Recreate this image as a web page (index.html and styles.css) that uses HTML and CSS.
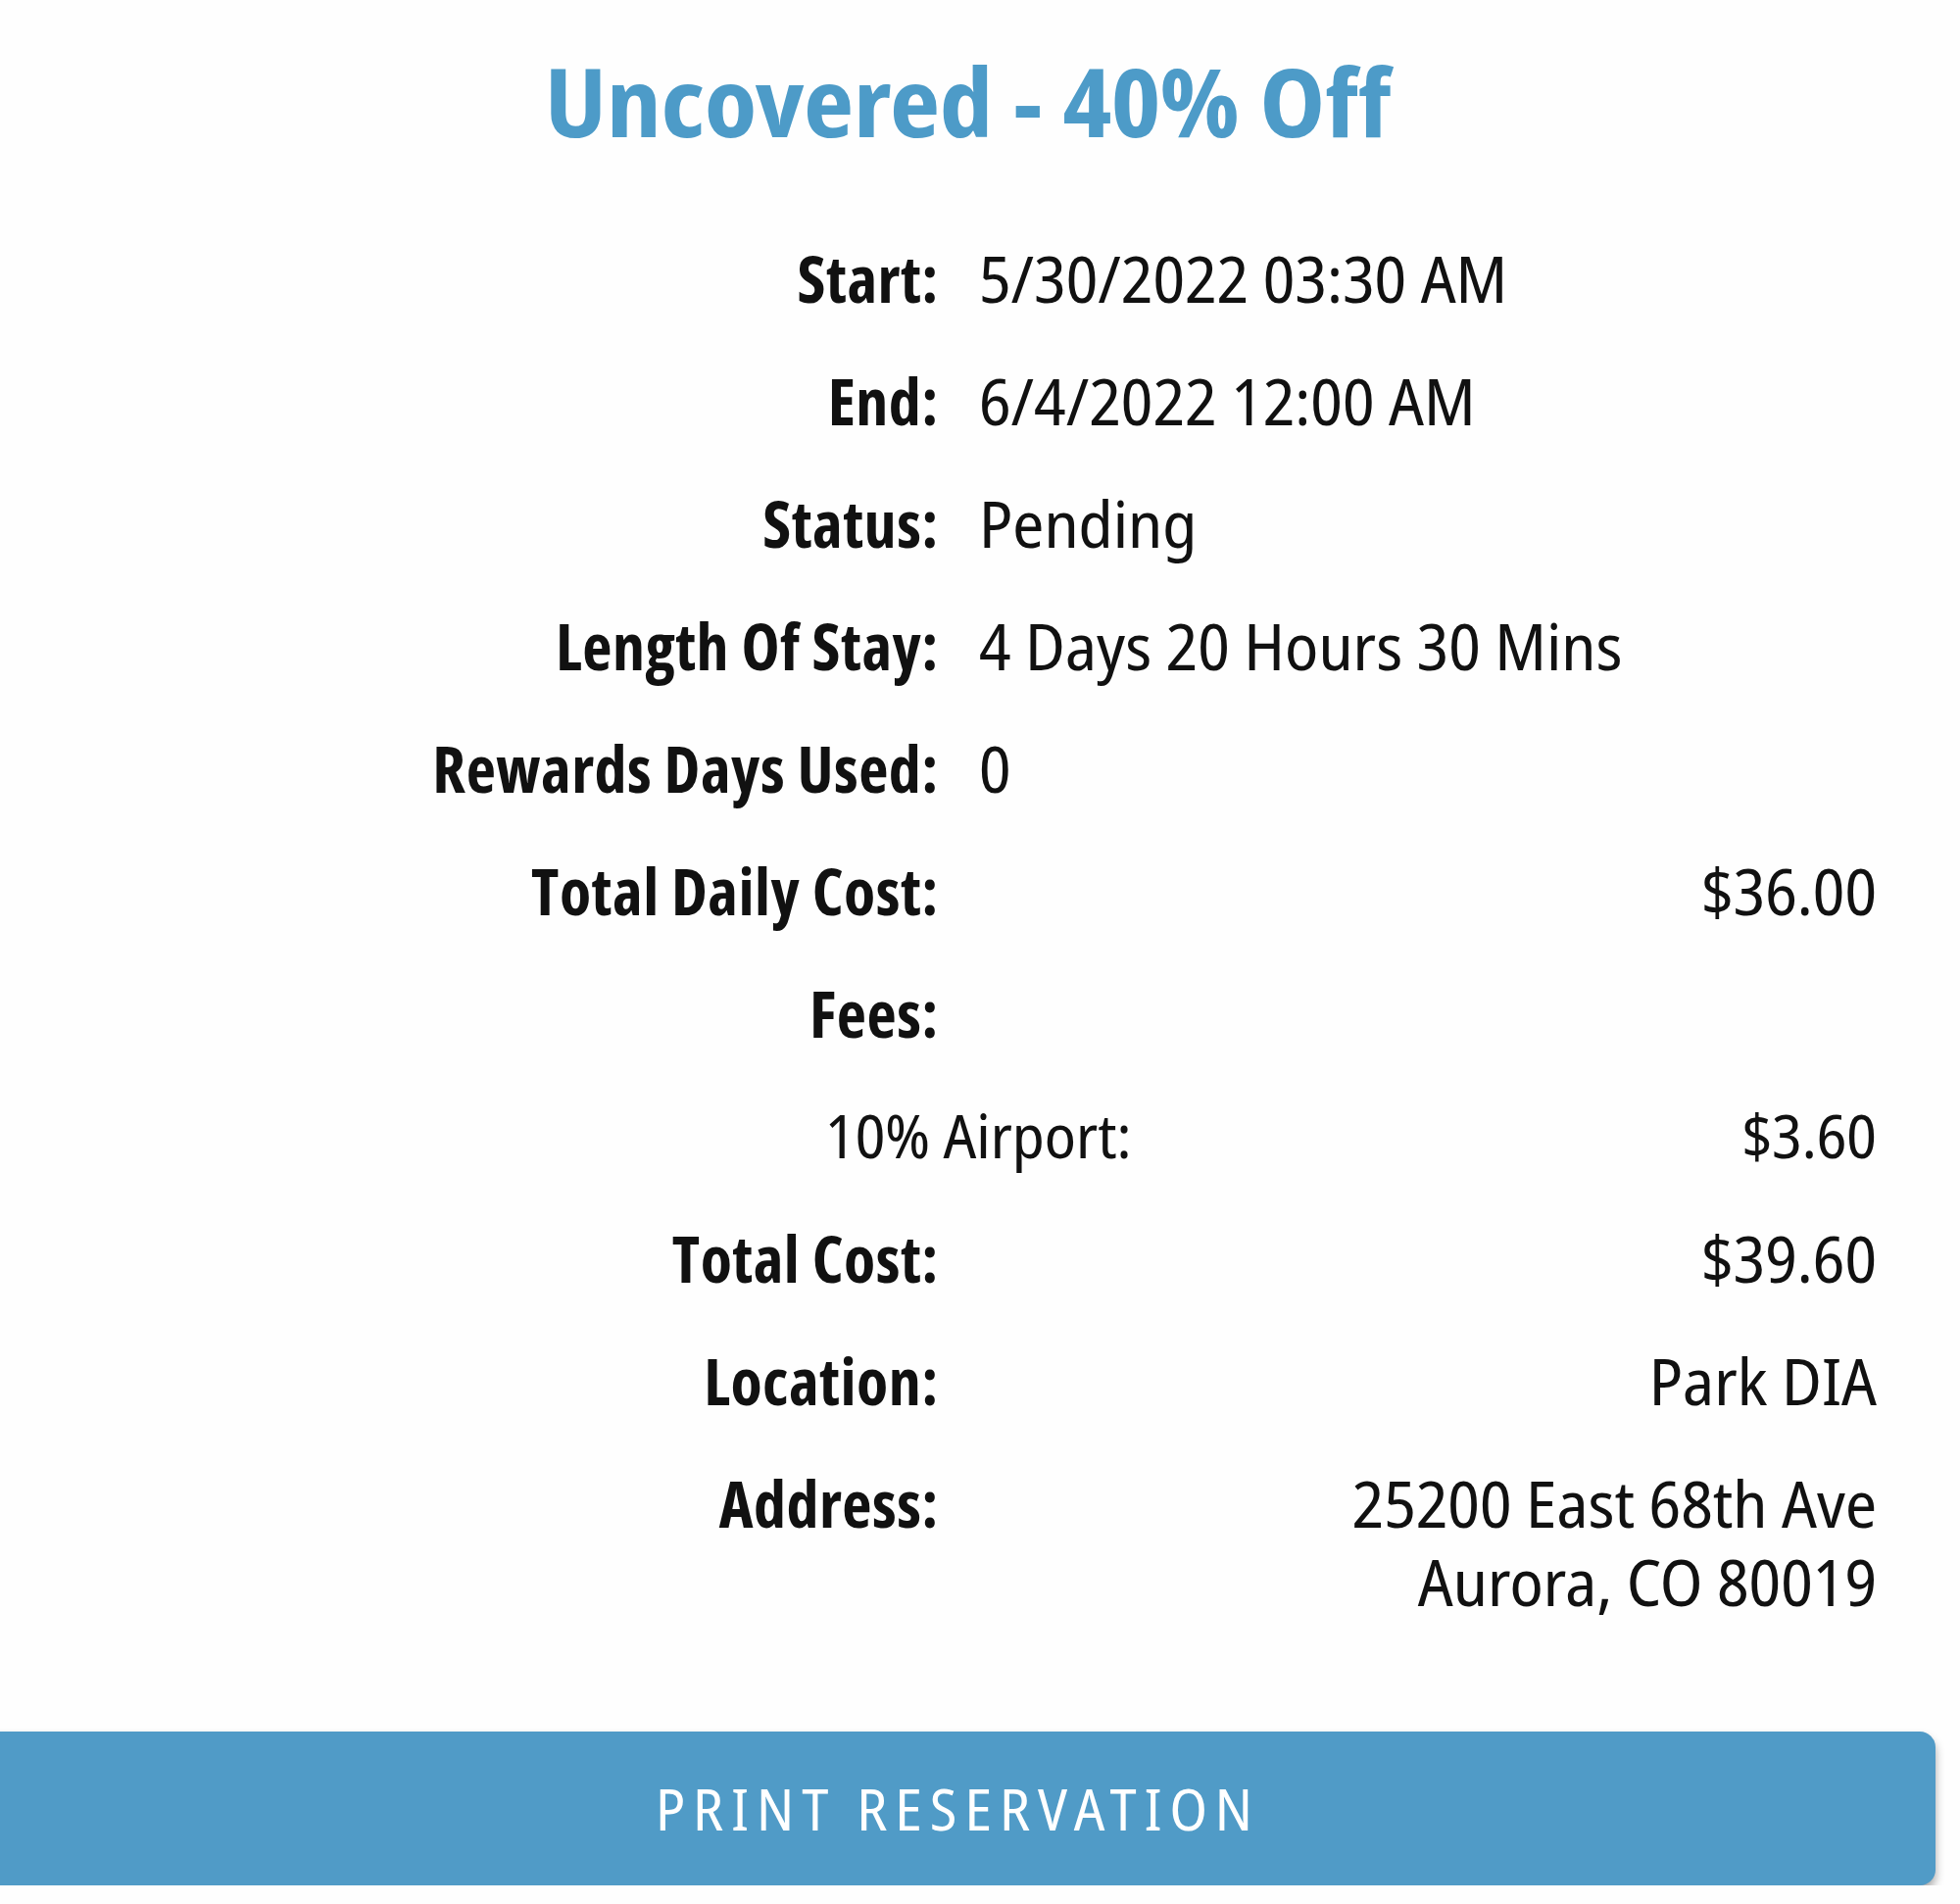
FILE: index.html
```html
<!DOCTYPE html>
<html lang="en">
<head>
<meta charset="utf-8">
<title>Reservation</title>
<link rel="stylesheet" href="styles.css">
</head>
<body>
<main class="page">
  <h1 class="title">Uncovered - 40% Off</h1>
  <dl class="details">
    <dt class="label">Start:</dt>
    <dd class="value">5/30/2022 03:30 AM</dd>
    <dt class="label">End:</dt>
    <dd class="value">6/4/2022 12:00 AM</dd>
    <dt class="label">Status:</dt>
    <dd class="value">Pending</dd>
    <dt class="label">Length Of Stay:</dt>
    <dd class="value">4 Days 20 Hours 30 Mins</dd>
    <dt class="label">Rewards Days Used:</dt>
    <dd class="value">0</dd>
    <dt class="label">Total Daily Cost:</dt>
    <dd class="value value-right">$36.00</dd>
    <dt class="label">Fees:</dt>
    <dd class="value"></dd>
    <div class="fee-row">
      <span class="fee-name">10% Airport:</span>
      <span class="fee-amount">$3.60</span>
    </div>
    <dt class="label">Total Cost:</dt>
    <dd class="value value-right">$39.60</dd>
    <dt class="label">Location:</dt>
    <dd class="value value-right">Park DIA</dd>
    <dt class="label">Address:</dt>
    <dd class="value value-right">
      <span class="addr-line">25200 East 68th Ave</span>
      <span class="addr-line">Aurora, CO 80019</span>
    </dd>
  </dl>
  <button class="print-btn" type="button">PRINT RESERVATION</button>
</main>
</body>
</html>
```
FILE: styles.css
```css
html, body {
  margin: 0;
  padding: 0;
  background: #fefefe;
}

body {
  font-family: "Noto Sans Display", "Open Sans", "Liberation Sans", sans-serif;
  font-stretch: condensed;
  color: #111;
  overflow: hidden;
}

.page {
  width: 1975px;
  padding-top: 42px;
}

.title {
  margin: 0;
  text-align: center;
  font-size: 97px;
  line-height: 120px;
  font-weight: 700;
  color: #4d9bc8;
}

.details {
  margin: 81px 0 0 0;
  padding-right: 60px;
  display: grid;
  grid-template-columns: 958px 1fr;
  column-gap: 41px;
  row-gap: 45px;
  font-size: 66px;
  line-height: 80px;
}

.label {
  margin: 0;
  text-align: right;
  font-family: "Open Sans", "Noto Sans Display", sans-serif;
  font-weight: 700;
  letter-spacing: 0.5px;
}

.value {
  margin: 0;
  font-weight: 400;
  min-height: 80px;
}

.value-right {
  text-align: right;
}

.addr-line {
  display: block;
}

.fee-row {
  grid-column: 1 / -1;
  display: flex;
  justify-content: space-between;
  padding-left: 842px;
  font-size: 62px;
}

.print-btn {
  display: block;
  margin: 114px 0 0 -20px;
  width: 1995px;
  height: 157px;
  border: none;
  border-radius: 16px;
  background: #509bc7;
  color: #fff;
  font-family: inherit;
  font-stretch: condensed;
  font-size: 58px;
  letter-spacing: 8px;
  box-shadow: 0 6px 10px rgba(0, 0, 0, 0.35);
  cursor: pointer;
}
```
